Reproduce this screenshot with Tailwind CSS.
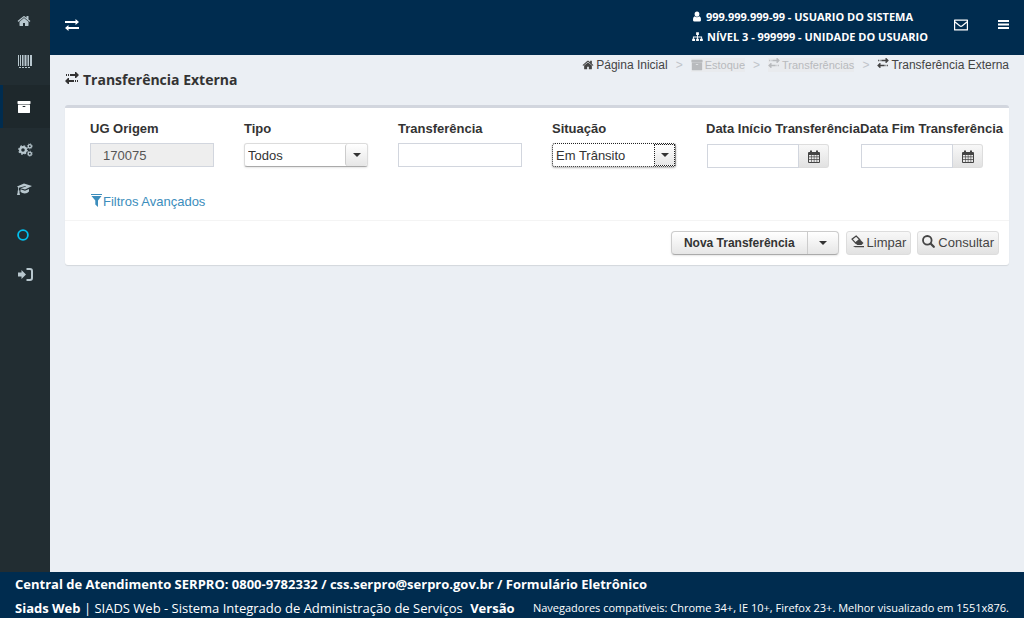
<!DOCTYPE html>
<html lang="pt-BR">

<head>
  <meta charset="UTF-8" />
  <meta name="viewport" content="width=device-width, initial-scale=1" />
  <title>Siads Web - Transferência Externa</title>
  <script src="https://cdn.jsdelivr.net/npm/@tailwindcss/browser@4"></script>
</head>

<body class="flex min-h-screen flex-col bg-[#ebeff4] font-['Liberation_Sans',Arial,sans-serif] text-[13px] text-[#333333]">

  <!-- Icon sprite -->
  <svg class="hidden" aria-hidden="true">
    <symbol id="i-home" viewBox="0 0 1792 1792">
      <path fill="currentColor" d="M1472 992v480q0 26-19 45t-45 19h-384v-384h-256v384h-384q-26 0-45-19t-19-45v-480q0-1 .5-3t.5-3l575-474 575 474q1 2 1 6zm223-69l-62 74q-8 9-21 11h-3q-13 0-21-7l-692-577-692 577q-12 8-24 7-13-2-21-11l-62-74q-8-10-7-23.5t11-21.5l719-599q32-26 76-26t76 26l244 204v-195q0-14 9-23t23-9h192q14 0 23 9t9 23v408l219 182q10 8 11 21.5t-7 23.5z" />
    </symbol>
    <symbol id="i-archive" viewBox="0 0 1792 1792">
      <path fill="currentColor" d="M1088 832q0-26-19-45t-45-19h-256q-26 0-45 19t-19 45 19 45 45 19h256q26 0 45-19t19-45zm576-192v960q0 26-19 45t-45 19h-1408q-26 0-45-19t-19-45v-960q0-26 19-45t45-19h1408q26 0 45 19t19 45zm64-448v256q0 26-19 45t-45 19h-1536q-26 0-45-19t-19-45v-256q0-26 19-45t45-19h1536q26 0 45 19t19 45z" />
    </symbol>
    <symbol id="i-barcode" viewBox="0 0 14 13">
      <path fill="currentColor" d="M0 0h1v11H0zM2 0h1v11H2zM4 0h1.500v11H4zM6.500 0h2v11h-2zM9.500 0H11v11H9.500zM12 0h2v11h-2zM1 12h2v1H1zM4 12h2v1H4zM7 12h2v1H7zM10 12h2v1h-2z" />
    </symbol>
    <symbol id="i-cogs" viewBox="0 0 15 14">
      <g fill="none" stroke="currentColor">
        <circle cx="5" cy="7" r="2.900" stroke-width="2.200" />
        <circle cx="5" cy="7" r="4.200" stroke-width="1.300" stroke-dasharray="1.650 1.650" />
        <circle cx="11.800" cy="3.300" r="1.600" stroke-width="1.300" />
        <circle cx="11.800" cy="3.300" r="2.500" stroke-width=".8" stroke-dasharray=".98 .98" />
        <circle cx="11.800" cy="10.700" r="1.600" stroke-width="1.300" />
        <circle cx="11.800" cy="10.700" r="2.500" stroke-width=".8" stroke-dasharray=".98 .98" />
      </g>
    </symbol>
    <symbol id="i-grad" viewBox="0 0 15 12">
      <path fill="currentColor" d="M7 .500l8 2.500L8 6.500 3.500 5.200 9 3.600 8.500 3 2 4.800v2.400l.8.800-.4.700L3 12H0l.8-3.300-.3-.7.7-.8V4.500L0 3.500zM3.500 6.300L8 7.700l4-1.700v2.500C10 11 6 11 3.500 8.800z" />
    </symbol>
    <symbol id="i-circle" viewBox="0 0 12 12">
      <circle cx="6" cy="6" r="4.900" fill="none" stroke="currentColor" stroke-width="1.800" />
    </symbol>
    <symbol id="i-login" viewBox="0 0 15 13">
      <path fill="currentColor" d="M0 4.500h3.500V2L8 6.500 3.500 11V8.500H0z" />
      <path fill="none" stroke="currentColor" stroke-width="2" d="M8.500 1H12q2 0 2 2v7q0 2-2 2H8.500" />
    </symbol>
    <symbol id="i-exchange" viewBox="0 0 14 12">
      <path fill="currentColor" d="M0 2h10.500V0L14 3l-3.500 3V4H0zM14 8H3.500V6L0 9l3.500 3v-2H14z" />
    </symbol>
    <symbol id="i-transfer" viewBox="0 0 14 12">
      <path fill="currentColor" d="M1 2h1v2H1zM3 2h1v2H3zM5 2h5V0h1l3 3-3 3h-1V4H5zM0 9l3-3h1v2h5v2H4v2H3zM10 8h1v2h-1zM12 8h1v2h-1z" />
    </symbol>
    <symbol id="i-user" viewBox="0 0 10 11">
      <path fill="currentColor" d="M5 .500a2.400 2.600 0 0 1 0 5.200A2.400 2.600 0 0 1 5 .500zM2.600 5.200Q5 7.500 7.400 5.200 9.400 6 9 9.300q-.2 1.200-1.400 1.200H2.400Q1.200 10.500 1 9.300.6 6 2.600 5.200z" />
    </symbol>
    <symbol id="i-sitemap" viewBox="0 0 12 11">
      <path fill="currentColor" d="M4.500 1h3v3h-1v1.500H11V8h.800v2.500H8.700V8H10V6.500H6.500V8h1v2.500h-3V8h1V6.500H2V8h1.300v2.500H.2V8H1V5.500h4.500V4h-1z" />
    </symbol>
    <symbol id="i-mail" viewBox="0 0 14 11">
      <path fill="none" stroke="currentColor" stroke-width="1.200" stroke-linejoin="round" d="M.6.600h12.800v9.800H.6zM.8 2.300l4.900 4q1.300 1 2.600 0l4.900-4" />
    </symbol>
    <symbol id="i-bars" viewBox="0 0 11 9">
      <path fill="currentColor" d="M0 0h11v2H0zM0 3.500h11v2H0zM0 7h11v2H0z" />
    </symbol>
    <symbol id="i-calendar" viewBox="0 0 12 13">
      <path fill="currentColor" fill-rule="evenodd" d="M1 2h1V.5h2V2h4V.5h2V2h1q1 0 1 1v9q0 1-1 1H1q-1 0-1-1V3q0-1 1-1zM1 5v1.500h2V5zM3.600 5v1.500H5.800V5zM6.400 5v1.500h2.200V5zM9.200 5v1.500H11V5zM1 7.200v2h2v-2zM3.600 7.200v2h2.200v-2zM6.400 7.200v2h2.200v-2zM9.200 7.200v2H11v-2zM1 9.900V12h2V9.900zM3.600 9.900V12h2.200V9.900zM6.400 9.900V12h2.200V9.900zM9.200 9.900V12H11V9.900z" />
    </symbol>
    <symbol id="i-filter" viewBox="0 0 11 13">
      <path fill="currentColor" d="M0 0h11v1H0zM.5 2h10L7 6.500V13L4.300 10.500v-4z" />
    </symbol>
    <symbol id="i-eraser" viewBox="0 0 13 13">
      <path fill="currentColor" d="M2 11h11v1.300H4z" />
      <path fill="none" stroke="currentColor" stroke-width="1.200" d="M5.200 1L1 4.200 4.500 8 8.700 4.500z" />
      <path fill="currentColor" d="M8.500 4L4 8l2.300 2h4.200L12.500 8z" />
    </symbol>
    <symbol id="i-search" viewBox="0 0 13 13">
      <circle cx="5.300" cy="5.300" r="4.300" fill="none" stroke="currentColor" stroke-width="1.800" />
      <path stroke="currentColor" stroke-width="2.200" stroke-linecap="round" d="M8.800 8.800l3 3" />
    </symbol>
    <symbol id="i-caret" viewBox="0 0 8 4">
      <path fill="currentColor" d="M0 0h8L4 4z" />
    </symbol>
  </svg>

  <div class="flex flex-1">
    <!-- Sidebar -->
    <aside class="w-[50px] shrink-0 bg-[#222d32] pt-px text-[#b8c7ce]">
      <nav class="flex flex-col">
        <a href="#" aria-label="Página Inicial" class="flex h-10 items-center pl-[17px]"><svg class="size-[14px]"><use href="#i-home" /></svg></a>
        <a href="#" aria-label="Patrimônio" class="flex h-10 items-center pl-[18px]"><svg class="h-[13px] w-[14px]"><use href="#i-barcode" /></svg></a>
        <a href="#" aria-label="Estoque" class="mt-1 flex h-[43px] items-center border-l-3 border-[#002c4f] bg-[#1e282c] pl-[14px] text-white"><svg class="size-[14px]"><use href="#i-archive" /></svg></a>
        <a href="#" aria-label="Configurações" class="flex h-[43px] items-center pl-[18px]"><svg class="h-[14px] w-[15px]"><use href="#i-cogs" /></svg></a>
        <a href="#" aria-label="Treinamento" class="flex h-10 items-center pb-1 pl-[17px]"><svg class="h-3 w-[15px]"><use href="#i-grad" /></svg></a>
        <a href="#" aria-label="Ajuda" class="flex h-[43px] items-center pl-[17px] pt-1 text-[#00c0ef]"><svg class="size-3"><use href="#i-circle" /></svg></a>
        <a href="#" aria-label="Sair" class="flex h-10 items-center pl-[18px]"><svg class="h-[13px] w-[15px]"><use href="#i-login" /></svg></a>
      </nav>
    </aside>

    <div class="min-w-0 flex-1">
      <!-- Top bar -->
      <header class="flex h-[55px] items-center bg-[#002c4f] px-[15px] pb-[2px] font-['Open_Sans',sans-serif] text-white">
        <button type="button" aria-label="Alternar menu" class="mb-1"><svg class="h-3 w-[14px]"><use href="#i-exchange" /></svg></button>
        <div class="ml-auto w-[236px] text-[11px] leading-5 font-bold whitespace-nowrap">
          <div class="flex items-center gap-1"><svg class="h-[11px] w-[10px]"><use href="#i-user" /></svg>999.999.999-99 - USUARIO DO SISTEMA</div>
          <div class="flex items-center gap-1"><svg class="h-[11px] w-3"><use href="#i-sitemap" /></svg>NÍVEL 3 - 999999 - UNIDADE DO USUARIO</div>
        </div>
        <button type="button" aria-label="Mensagens" class="mb-1 ml-[26px]"><svg class="h-3 w-[14px]"><use href="#i-mail" /></svg></button>
        <button type="button" aria-label="Opções" class="mb-1 ml-[30px]"><svg class="h-[9px] w-[11px]"><use href="#i-bars" /></svg></button>
      </header>

      <main class="px-[15px]">
        <div class="flex h-[50px] items-start justify-between">
          <h1 class="flex items-center gap-1 pt-[15px] font-['Open_Sans',sans-serif] text-sm font-bold"><svg class="mb-1 h-3 w-[14px]"><use href="#i-transfer" /></svg>Transferência Externa</h1>
          <nav aria-label="Trilha" class="flex items-center pt-[2px] text-xs text-[#444444]">
            <a href="#" class="flex h-[14px] items-center gap-0.5"><svg class="size-3"><use href="#i-home" /></svg>Página Inicial</a>
            <span class="px-2 text-[#c0c4ca]">&gt;</span>
            <a href="#" class="flex h-[14px] items-center gap-0.5 bg-[#e9ebee] text-[11px] text-[#b8babd]"><svg class="size-3"><use href="#i-archive" /></svg>Estoque</a>
            <span class="px-2 text-[#c0c4ca]">&gt;</span>
            <a href="#" class="flex h-[14px] items-center gap-0.5 bg-[#e9ebee] text-[11px] text-[#b8babd]"><svg class="mb-1 h-[10px] w-3"><use href="#i-transfer" /></svg>Transferências</a>
            <span class="px-2 text-[#c0c4ca]">&gt;</span>
            <a href="#" class="flex h-[14px] items-center gap-0.5"><svg class="mb-1 h-[10px] w-3"><use href="#i-transfer" /></svg>Transferência Externa</a>
          </nav>
        </div>

        <!-- Filter box -->
        <form class="rounded-[3px] border-t-3 border-[#d2d6de] bg-white shadow-[0_1px_1px_rgba(0,0,0,0.1)]">
          <div class="px-[10px] pt-3">
            <div class="grid grid-cols-6">
              <div class="min-w-0 px-[15px]">
                <label for="ug" class="block h-[23px] font-bold whitespace-nowrap leading-[18px]">UG Origem</label>
                <input id="ug" type="text" value="170075" disabled class="block h-6 w-full border border-[#d2d6de] bg-[#eeeeee] px-3 text-[#555555]" />
              </div>
              <div class="min-w-0 px-[15px]">
                <label for="tipo" class="block h-[23px] font-bold whitespace-nowrap leading-[18px]">Tipo</label>
                <div class="relative">
                  <select id="tipo" class="block h-6 w-full appearance-none rounded-[3px] border border-[#dcdcdc] border-b-[#aaaaaa] bg-white pt-[2px] pl-[3px] shadow-[0_1px_2px_rgba(0,0,0,0.1)]">
                    <option>Todos</option>
                  </select>
                  <span class="pointer-events-none absolute inset-y-px right-px flex w-[22px] items-center justify-center rounded-[3px] border-l border-[#cccccc] bg-linear-to-b from-white to-[#e6e6e6]"><svg class="h-1 w-2"><use href="#i-caret" /></svg></span>
                </div>
              </div>
              <div class="min-w-0 px-[15px]">
                <label for="transf" class="block h-[23px] font-bold whitespace-nowrap leading-[18px]">Transferência</label>
                <input id="transf" type="text" class="block h-6 w-full border border-[#d2d6de] bg-white px-3" />
              </div>
              <div class="min-w-0 px-[15px]">
                <label for="situacao" class="block h-[23px] font-bold whitespace-nowrap leading-[18px]">Situação</label>
                <div class="relative">
                  <select id="situacao" class="block h-6 w-full appearance-none rounded-[3px] border border-dotted border-[#222222] bg-white pt-[2px] pl-[3px] shadow-[0_1px_2px_rgba(0,0,0,0.3)]">
                    <option>Em Trânsito</option>
                  </select>
                  <span class="pointer-events-none absolute inset-y-px right-px flex w-[21px] items-center justify-center border border-dotted border-[#222222] bg-linear-to-b from-white to-[#e6e6e6]"><svg class="h-1 w-2"><use href="#i-caret" /></svg></span>
                </div>
              </div>
              <div class="min-w-0 px-[15px]">
                <label for="inicio" class="block h-6 font-bold whitespace-nowrap leading-[18px]">Data Início Transferência</label>
                <div class="flex pl-px">
                  <input id="inicio" type="text" class="h-6 w-[92px] border border-[#d2d6de] bg-white px-2" />
                  <button type="button" aria-label="Abrir calendário" class="flex h-6 w-[30px] items-center justify-center rounded-r-[3px] border border-l-0 border-[#dddddd] bg-linear-to-b from-[#f8f8f8] to-[#e2e2e2] text-[#444444]"><svg class="h-[13px] w-3"><use href="#i-calendar" /></svg></button>
                </div>
              </div>
              <div class="min-w-0 px-[15px]">
                <label for="fim" class="block h-6 font-bold whitespace-nowrap leading-[18px]">Data Fim Transferência</label>
                <div class="flex pl-px">
                  <input id="fim" type="text" class="h-6 w-[92px] border border-[#d2d6de] bg-white px-2" />
                  <button type="button" aria-label="Abrir calendário" class="flex h-6 w-[30px] items-center justify-center rounded-r-[3px] border border-l-0 border-[#dddddd] bg-linear-to-b from-[#f8f8f8] to-[#e2e2e2] text-[#444444]"><svg class="h-[13px] w-3"><use href="#i-calendar" /></svg></button>
                </div>
              </div>
            </div>
            <a href="#" class="mx-4 mt-6 mb-2 inline-flex h-5 items-center gap-px text-[#3c8dbc]"><svg class="mb-1 h-[13px] w-[11px]"><use href="#i-filter" /></svg>Filtros Avançados</a>
          </div>

          <div class="flex justify-end border-t border-[#f4f4f4] p-[10px]">
            <div class="mr-[7px] flex h-6 rounded-[4px] border border-[#cccccc] border-b-[#aaaaaa] bg-linear-to-b from-white to-[#e6e6e6] shadow-[0_1px_2px_rgba(0,0,0,0.1)]">
              <button type="button" class="px-3 text-xs font-bold">Nova Transferência</button>
              <button type="button" aria-label="Mais opções" class="flex w-[31px] items-center justify-center border-l border-[#cccccc]"><svg class="h-1 w-2"><use href="#i-caret" /></svg></button>
            </div>
            <button type="button" class="mr-[6px] flex h-6 items-center gap-[3px] rounded-[3px] border border-[#dddddd] bg-linear-to-b from-[#f8f8f8] to-[#e2e2e2] px-1 text-[#444444]"><svg class="mb-1 size-[13px]"><use href="#i-eraser" /></svg>Limpar</button>
            <button type="submit" class="flex h-6 items-center gap-[3px] rounded-[3px] border border-[#dddddd] bg-linear-to-b from-[#f8f8f8] to-[#e2e2e2] px-1 text-[#444444]"><svg class="mb-1 size-[13px]"><use href="#i-search" /></svg>Consultar</button>
          </div>
        </form>
      </main>
    </div>
  </div>

  <!-- Footer -->
  <footer class="bg-[#002c4f] px-[15px] font-['Open_Sans',sans-serif] text-[13px] leading-6 text-white">
    <div class="h-6 font-bold">Central de Atendimento SERPRO: 0800-9782332 / css.serpro@serpro.gov.br / Formulário Eletrônico</div>
    <div class="flex h-[22px] justify-between whitespace-nowrap">
      <div><strong>Siads Web</strong> | SIADS Web - Sistema Integrado de Administração de Serviços <strong class="ml-1">Versão</strong></div>
      <div class="text-[11px]">Navegadores compatíveis: Chrome 34+, IE 10+, Firefox 23+. Melhor visualizado em 1551x876.</div>
    </div>
  </footer>
</body>

</html>
